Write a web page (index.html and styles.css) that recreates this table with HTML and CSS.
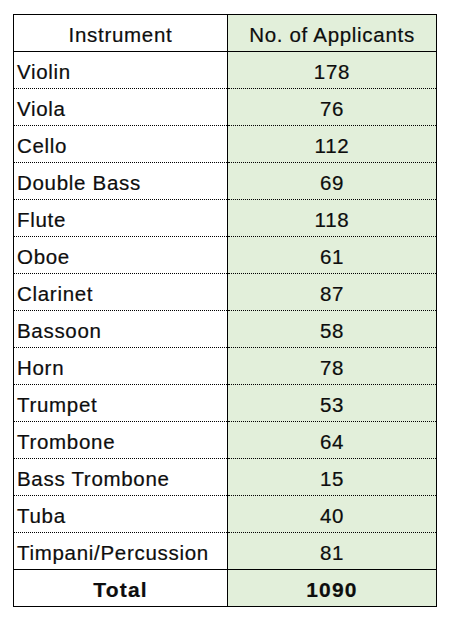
FILE: index.html
```html
<!DOCTYPE html>
<html>
<head>
<meta charset="utf-8">
<link rel="stylesheet" href="styles.css">
</head>
<body>
<table class="apps">
  <thead>
    <tr><th class="name">Instrument</th><th class="num">No. of Applicants</th></tr>
  </thead>
  <tbody>
    <tr><td class="name">Violin</td><td class="num">178</td></tr>
    <tr><td class="name">Viola</td><td class="num">76</td></tr>
    <tr><td class="name">Cello</td><td class="num">112</td></tr>
    <tr><td class="name">Double Bass</td><td class="num">69</td></tr>
    <tr><td class="name">Flute</td><td class="num">118</td></tr>
    <tr><td class="name">Oboe</td><td class="num">61</td></tr>
    <tr><td class="name">Clarinet</td><td class="num">87</td></tr>
    <tr><td class="name">Bassoon</td><td class="num">58</td></tr>
    <tr><td class="name">Horn</td><td class="num">78</td></tr>
    <tr><td class="name">Trumpet</td><td class="num">53</td></tr>
    <tr><td class="name">Trombone</td><td class="num">64</td></tr>
    <tr><td class="name">Bass Trombone</td><td class="num">15</td></tr>
    <tr><td class="name">Tuba</td><td class="num">40</td></tr>
    <tr><td class="name">Timpani/Percussion</td><td class="num">81</td></tr>
  </tbody>
  <tfoot>
    <tr><td class="name total">Total</td><td class="num total">1090</td></tr>
  </tfoot>
</table>
</body>
</html>
```
FILE: styles.css
```css
html, body {
  margin: 0;
  padding: 0;
  background: #ffffff;
}
.apps {
  margin: 14px 0 0 13px;
  border-collapse: collapse;
  border: 1px solid #000;
  font-family: "Liberation Sans", Arial, sans-serif;
  font-size: 20.5px;
  letter-spacing: 0.7px;
  color: #0d0d0d;
  table-layout: fixed;
  width: 424px;
}
.apps th, .apps td {
  height: 37px;
  padding: 4px 0 0 0;
  box-sizing: border-box;
  font-weight: normal;
  border-left: 1px solid #000;
  border-right: 1px solid #000;
  border-bottom: 1px dotted #000;
  white-space: nowrap;
  vertical-align: middle;
  -webkit-text-stroke: 0.2px #0d0d0d;
}
.apps th.name { width: 214px; }
.apps .name { text-align: left; padding-left: 3px; }
.apps th.name { text-align: center; padding-left: 0; }
.apps .num { text-align: center; background: #e2efda; }
.apps thead th { border-bottom: 1px solid #000; }
.apps tbody tr:last-child td { border-bottom: 1px solid #000; }
.apps tfoot td { border-bottom: 1px solid #000; }
.apps .total { font-weight: bold; text-align: center; padding-left: 0; font-size: 21px; letter-spacing: 1.2px; }
```
